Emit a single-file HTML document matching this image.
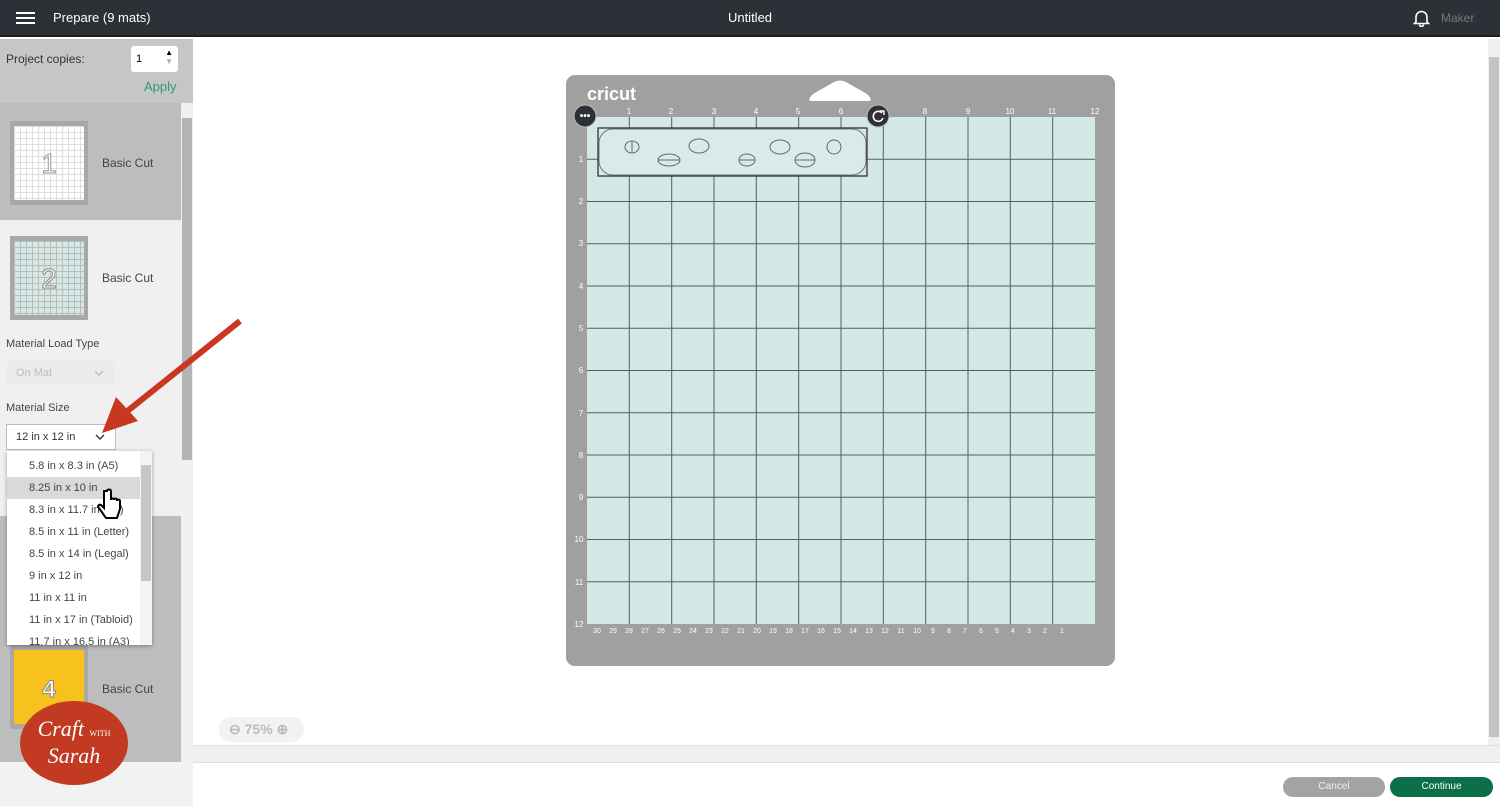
<!DOCTYPE html>
<html><head><meta charset="utf-8"><style>
*{margin:0;padding:0;box-sizing:border-box}
body{width:1500px;height:806px;overflow:hidden;background:#fff;font-family:"Liberation Sans",sans-serif;position:relative}
.abs{position:absolute}
</style></head><body>
<div class="abs" style="left:0;top:0;width:1500px;height:37px;background:#2e3038;border-bottom:2px solid #1e1f24"></div>
<div class="abs" style="left:16px;top:12px;width:19px;height:2px;background:#fff;box-shadow:0 5px 0 #fff,0 10px 0 #fff"></div>
<div class="abs" style="left:53px;top:10px;color:#fff;font-size:13px">Prepare (9 mats)</div>
<div class="abs" style="left:0;top:10px;width:1500px;text-align:center;color:#fff;font-size:13px">Untitled</div>
<svg class="abs" style="left:1413px;top:9px" width="17" height="18" viewBox="0 0 17 18"><path d="M3 13V8a5.5 5.5 0 0 1 11 0v5l1.5 1.5h-14z M6.5 15.5a2 2 0 0 0 4 0" fill="none" stroke="#fff" stroke-width="1.6"/></svg>
<div class="abs" style="left:1441px;top:11px;color:#777;font-size:12px">Maker</div>

<!-- sidebar -->
<div class="abs" style="left:0;top:39px;width:193px;height:767px;background:#f0f0f0"></div>
<div class="abs" style="left:0;top:39px;width:193px;height:64px;background:#c6c6c6"></div>
<div class="abs" style="left:6px;top:52px;font-size:12px;color:#333">Project copies:</div>
<div class="abs" style="left:131px;top:46px;width:47px;height:26px;background:#fff;border-radius:3px;font-size:11px;padding:7px 5px">1<span style="position:absolute;right:5px;top:2px;font-size:8px;line-height:9px">▲<br><span style="color:#aaa">▼</span></span></div>
<div class="abs" style="left:144px;top:79px;font-size:13px;color:#2f9a6c">Apply</div>
<div class="abs" style="left:0;top:103px;width:181px;height:117px;background:#bdbdbd"></div>
<div class="abs" style="left:0;top:516px;width:181px;height:246px;background:#bdbdbd"></div>
<div class="abs" style="left:181px;top:103px;width:12px;height:659px;background:#f0f0f0"></div>
<div class="abs" style="left:182px;top:118px;width:10px;height:342px;background:#b4b4b4"></div>
<div class="abs" style="left:0;top:762px;width:193px;height:44px;background:#f2f2f2"></div>
<!-- thumbs -->
<div class="abs" style="left:10px;top:121px;width:78px;height:84px;background:#a8a8a8;padding:5px 4px"><div style="width:100%;height:100%;background:#fff;background-image:linear-gradient(#ddd 1px,transparent 1px),linear-gradient(90deg,#ddd 1px,transparent 1px);background-size:6px 6px;text-align:center;font-size:28px;color:#fff;-webkit-text-stroke:1px #999;padding-top:22px">1</div></div>
<div class="abs" style="left:102px;top:156px;font-size:12px;color:#444">Basic Cut</div>
<div class="abs" style="left:10px;top:236px;width:78px;height:84px;background:#a8a8a8;padding:5px 4px"><div style="width:100%;height:100%;background:#d4e8e6;background-image:linear-gradient(#bbb 1px,transparent 1px),linear-gradient(90deg,#bbb 1px,transparent 1px);background-size:6px 6px;text-align:center;font-size:28px;color:#fff;-webkit-text-stroke:1px #888;padding-top:22px">2</div></div>
<div class="abs" style="left:102px;top:271px;font-size:12px;color:#444">Basic Cut</div>
<div class="abs" style="left:6px;top:338px;font-size:11px;color:#444">Material Load Type</div>
<div class="abs" style="left:7px;top:361px;width:108px;height:24px;background:#ebebeb;font-size:11px;color:#bbb;padding:6px 9px">On Mat<svg style="position:absolute;right:11px;top:9px" width="10" height="6"><path d="M1 1l4 4 4-4" fill="none" stroke="#bbb" stroke-width="1.4"/></svg></div>
<div class="abs" style="left:6px;top:402px;font-size:11px;color:#444">Material Size</div>
<div class="abs" style="left:6px;top:424px;width:110px;height:26px;background:#fff;border:1px solid #bbb;font-size:11px;color:#333;padding:6px 9px">12 in x 12 in<svg style="position:absolute;right:10px;top:9px" width="10" height="6"><path d="M1 1l4 4 4-4" fill="none" stroke="#333" stroke-width="1.4"/></svg></div>
<div class="abs" style="left:10px;top:645px;width:78px;height:84px;background:#a8a8a8;padding:5px 4px"><div style="width:100%;height:100%;background:#f8c21e;text-align:center;font-size:24px;font-weight:bold;color:#fff;-webkit-text-stroke:1px #888;padding-top:26px">4</div></div>
<div class="abs" style="left:102px;top:682px;font-size:12px;color:#444">Basic Cut</div>
<!-- dropdown -->
<div class="abs" style="left:7px;top:451px;width:145px;height:194px;background:#fff;box-shadow:0 1px 4px rgba(0,0,0,.35);overflow:hidden;font-size:11px;color:#444">
<div style="position:absolute;left:0;top:26px;width:133px;height:22px;background:#d9d9d9"></div>
<div style="position:absolute;left:133px;top:0;width:12px;height:194px;background:#f3f3f3"></div>
<div style="position:absolute;left:134px;top:14px;width:10px;height:116px;background:#c6c6c6"></div>
<div style="position:absolute;left:22px;top:4px;line-height:22px">5.8 in x 8.3 in (A5)<br>8.25 in x 10 in<br>8.3 in x 11.7 in (A4)<br>8.5 in x 11 in (Letter)<br>8.5 in x 14 in (Legal)<br>9 in x 12 in<br>11 in x 11 in<br>11 in x 17 in (Tabloid)<br>11.7 in x 16.5 in (A3)</div>
</div>
<svg class="abs" style="left:95px;top:488px" width="28" height="36" viewBox="0 0 28 36"><path d="M9 3v17l-3-3c-2-1-4 1-2 3l7 10h11l3-9v-8c0-2-3-2-3 0v-1c0-2-3-2-3 0c0-2-3-2-3 0V3c0-2-4-2-4 0z" fill="#fff" stroke="#000" stroke-width="2"/></svg>
<!-- arrow -->
<svg class="abs" style="left:90px;top:315px" width="160" height="125"><line x1="150" y1="6" x2="35" y2="98" stroke="#c8371f" stroke-width="6"/><path d="M12 118 L26 82 L48 106 Z" fill="#c8371f"/></svg>
<!-- logo -->
<div class="abs" style="left:20px;top:701px;width:108px;height:84px;border-radius:50%;background:#c23a22;color:#fff;font-family:'Liberation Serif',serif;font-style:italic;text-align:center;font-size:22px;line-height:22px;padding-top:17px">Craft <span style="font-size:8px;font-style:normal">WITH</span><br>Sarah</div>

<!-- main scrollbars -->
<div class="abs" style="left:1488px;top:39px;width:12px;height:706px;background:#f0f0f0"></div>
<div class="abs" style="left:1489px;top:57px;width:10px;height:680px;background:#c4c4c4"></div>
<div class="abs" style="left:193px;top:745px;width:1307px;height:17px;background:#f0f0f0;border-top:1px solid #e0e0e0"></div>
<div class="abs" style="left:193px;top:762px;width:1307px;height:1px;background:#ddd"></div>
<!-- zoom -->
<div class="abs" style="left:219px;top:717px;width:85px;height:25px;background:#f2f2f2;border-radius:12px;color:#bbb;font-size:14px;padding:4px 10px;font-weight:bold">⊖ 75% ⊕</div>
<!-- buttons -->
<div class="abs" style="left:1283px;top:777px;width:102px;height:20px;background:#a3a3a3;border-radius:10px;color:#eee;font-size:10px;text-align:center;line-height:20px">Cancel</div>
<div class="abs" style="left:1390px;top:777px;width:103px;height:20px;background:#0b7048;border-radius:10px;color:#fff;font-size:10px;text-align:center;line-height:20px">Continue</div>

<!-- mat -->
<svg class="abs" style="left:566px;top:75px" width="550" height="592" viewBox="0 0 550 592">
<rect x="0" y="0" width="549" height="591" rx="9" fill="#a0a0a0"/>
<path d="M246 26 Q240 26 247 19 L268 7 Q274 4 280 7 L301 19 Q308 26 302 26 Z" fill="#fff"/>
<text x="21" y="25" font-family="Liberation Sans" font-weight="bold" font-size="18" fill="#fff">cricut</text>
<rect x="21" y="42" width="508" height="507" fill="#d4e8e6"/>
<g stroke="#4f6261" stroke-width="1">
<line x1="63.3" y1="42" x2="63.3" y2="549"/><line x1="105.7" y1="42" x2="105.7" y2="549"/><line x1="148" y1="42" x2="148" y2="549"/><line x1="190.3" y1="42" x2="190.3" y2="549"/><line x1="232.7" y1="42" x2="232.7" y2="549"/><line x1="275" y1="42" x2="275" y2="549"/><line x1="317.3" y1="42" x2="317.3" y2="549"/><line x1="359.7" y1="42" x2="359.7" y2="549"/><line x1="402" y1="42" x2="402" y2="549"/><line x1="444.3" y1="42" x2="444.3" y2="549"/><line x1="486.7" y1="42" x2="486.7" y2="549"/>
<line x1="21" y1="84.3" x2="529" y2="84.3"/><line x1="21" y1="126.5" x2="529" y2="126.5"/><line x1="21" y1="168.8" x2="529" y2="168.8"/><line x1="21" y1="211" x2="529" y2="211"/><line x1="21" y1="253.3" x2="529" y2="253.3"/><line x1="21" y1="295.5" x2="529" y2="295.5"/><line x1="21" y1="337.8" x2="529" y2="337.8"/><line x1="21" y1="380" x2="529" y2="380"/><line x1="21" y1="422.3" x2="529" y2="422.3"/><line x1="21" y1="464.5" x2="529" y2="464.5"/><line x1="21" y1="506.8" x2="529" y2="506.8"/>
</g>
<g font-family="Liberation Sans" font-size="8" fill="#fff" text-anchor="middle">
<text x="63" y="39">1</text><text x="105" y="39">2</text><text x="148" y="39">3</text><text x="190" y="39">4</text><text x="232" y="39">5</text><text x="275" y="39">6</text><text x="359" y="39">8</text><text x="402" y="39">9</text><text x="444" y="39">10</text><text x="486" y="39">11</text><text x="529" y="39">12</text>
<text x="15" y="87">1</text><text x="15" y="129">2</text><text x="15" y="171">3</text><text x="15" y="214">4</text><text x="15" y="256">5</text><text x="15" y="298">6</text><text x="15" y="341">7</text><text x="15" y="383">8</text><text x="15" y="425">9</text><text x="13" y="467">10</text><text x="13" y="510">11</text><text x="13" y="552">12</text>
</g>
<g font-family="Liberation Sans" font-size="7" fill="#fff" text-anchor="middle">
<text x="31" y="558">30</text><text x="47" y="558">29</text><text x="63" y="558">28</text><text x="79" y="558">27</text><text x="95" y="558">26</text><text x="111" y="558">25</text><text x="127" y="558">24</text><text x="143" y="558">23</text><text x="159" y="558">22</text><text x="175" y="558">21</text><text x="191" y="558">20</text><text x="207" y="558">19</text><text x="223" y="558">18</text><text x="239" y="558">17</text><text x="255" y="558">16</text><text x="271" y="558">15</text><text x="287" y="558">14</text><text x="303" y="558">13</text><text x="319" y="558">12</text><text x="335" y="558">11</text><text x="351" y="558">10</text><text x="367" y="558">9</text><text x="383" y="558">8</text><text x="399" y="558">7</text><text x="415" y="558">6</text><text x="431" y="558">5</text><text x="447" y="558">4</text><text x="463" y="558">3</text><text x="479" y="558">2</text><text x="496" y="558">1</text>
</g>
<rect x="32" y="53" width="269" height="48" fill="none" stroke="#333" stroke-width="1.3"/>
<rect x="33" y="54" width="267" height="46" rx="14" fill="#d9ebe9" stroke="#777" stroke-width="1"/>
<g fill="none" stroke="#666" stroke-width="1"><ellipse cx="66" cy="72" rx="7" ry="6"/><line x1="66" y1="66" x2="66" y2="78"/><ellipse cx="103" cy="85" rx="11" ry="6"/><line x1="92" y1="85" x2="114" y2="85"/><ellipse cx="133" cy="71" rx="10" ry="7"/><ellipse cx="181" cy="85" rx="8" ry="6"/><line x1="173" y1="85" x2="189" y2="85"/><ellipse cx="214" cy="72" rx="10" ry="7"/><ellipse cx="239" cy="85" rx="10" ry="7"/><line x1="229" y1="85" x2="249" y2="85"/><ellipse cx="268" cy="72" rx="7" ry="7"/></g>
<circle cx="19" cy="41" r="11" fill="#2e3038" stroke="#bbb"/><text x="19" y="44" font-size="10" fill="#fff" text-anchor="middle" font-family="Liberation Sans" font-weight="bold">•••</text>
<circle cx="312" cy="41" r="11" fill="#2e3038" stroke="#bbb"/><path d="M316 38 A5 5 0 1 0 317 43" fill="none" stroke="#fff" stroke-width="1.6"/><path d="M314 36 L318 36 L318 40" fill="none" stroke="#fff" stroke-width="1.4"/>
</svg>
</body></html>
